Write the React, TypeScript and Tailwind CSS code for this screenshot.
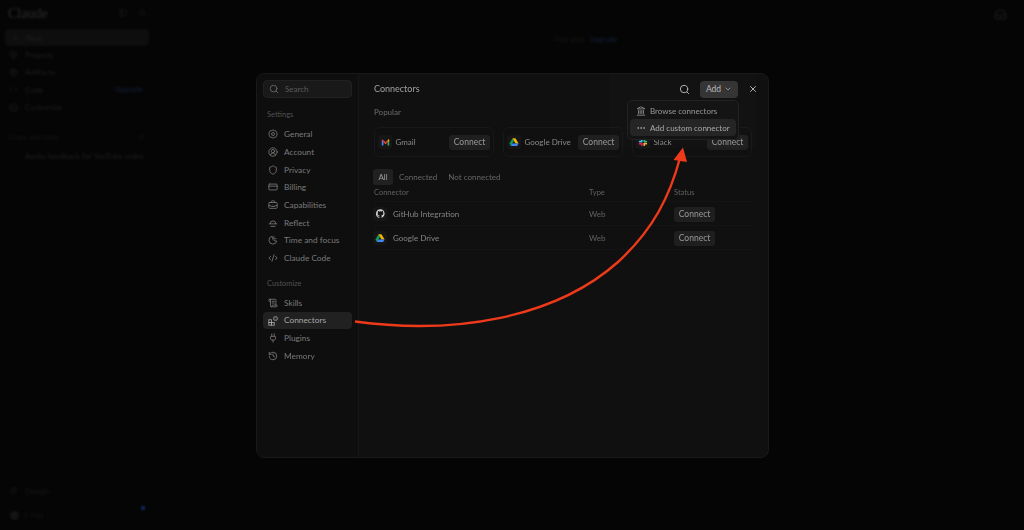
import { ChevronDown, Ellipsis, Search, X, Plus, Code, CodeXml, CreditCard, BriefcaseBusiness, CircleUserRound, ScrollText, History, Plug, Landmark, PanelLeft, Settings, Shield, Moon, Box, Package, Inbox, RefreshCw } from "lucide-react"
import type { ReactNode } from "react"

function GmailLogo() {
  return (
    <svg width="9" height="9" viewBox="0 0 24 24">
      <path d="M2 5v15h4.500V9z" fill="#4285f4" />
      <path d="M22 5v15h-4.500V9z" fill="#34a853" />
      <path d="M2 5l2-1 8 6.500L20 4l2 1v1l-10 8L2 6z" fill="#ea4335" />
      <path d="M6.500 9L12 13.500 17.500 9v3L12 16.500 6.500 12z" fill="#ea4335" />
      <path d="M19 3.500l3 1.500v2l-4.500 3.500z" fill="#fbbc04" />
    </svg>
  )
}

function DriveLogo({ size = 10 }: { size?: number }) {
  return (
    <svg width={size} height={size} viewBox="0 0 24 24">
      <path d="M8.500 3L1 15.500l3.500 6L12 9z" fill="#0f9d58" />
      <path d="M8.500 3h7L23 15.500h-7.500z" fill="#f4b400" />
      <path d="M8 15.500h15l-3.500 6h-15z" fill="#4285f4" />
    </svg>
  )
}

function SlackLogo() {
  return (
    <svg width="10" height="10" viewBox="0 0 24 24">
      <rect x="2" y="9" width="9" height="4" rx="2" fill="#36c5f0" />
      <rect x="7" y="2" width="4" height="9" rx="2" fill="#36c5f0" />
      <rect x="13" y="2" width="4" height="9" rx="2" fill="#2eb67d" />
      <rect x="13" y="9" width="9" height="4" rx="2" fill="#2eb67d" />
      <rect x="13" y="14" width="9" height="4" rx="2" fill="#ecb22e" />
      <rect x="13" y="15" width="4" height="7" rx="2" fill="#ecb22e" />
      <rect x="2" y="14" width="9" height="4" rx="2" fill="#e01e5a" />
      <rect x="7" y="15" width="4" height="7" rx="2" fill="#e01e5a" />
    </svg>
  )
}

function GithubLogo() {
  return (
    <svg width="9" height="9" viewBox="0 0 24 24" fill="#d0d0d0">
      <path d="M12 .5a12 12 0 0 0-3.800 23.400c.6.100.8-.3.800-.6v-2c-3.300.7-4-1.600-4-1.600-.5-1.400-1.300-1.800-1.300-1.800-1.100-.7.100-.7.100-.7 1.200.1 1.800 1.200 1.800 1.200 1.100 1.800 2.800 1.300 3.500 1 .1-.8.400-1.300.8-1.600-2.700-.3-5.500-1.300-5.500-5.900 0-1.300.5-2.400 1.200-3.200-.1-.3-.5-1.500.1-3.200 0 0 1-.3 3.300 1.200a11.500 11.500 0 0 1 6 0C17.300 4.700 18.300 5 18.300 5c.7 1.700.2 2.900.1 3.200.8.800 1.200 1.900 1.200 3.200 0 4.600-2.800 5.600-5.500 5.900.4.400.8 1.100.8 2.200v3.300c0 .3.200.7.800.6A12 12 0 0 0 12 .5z" />
    </svg>
  )
}

function ConnectBtn() {
  return (
    <span className="flex h-[15px] w-[41px] shrink-0 items-center justify-center rounded-[3px] bg-[#1f1f1f] text-[8.500px] text-[#989898]">
      Connect
    </span>
  )
}

function LogoBox({ children }: { children: ReactNode }) {
  return <span className="flex size-[14px] shrink-0 items-center justify-center rounded-[3px] bg-[#161616]">{children}</span>
}

function PopularCard({ name, logo }: { name: string; logo: ReactNode }) {
  return (
    <div className="flex h-[30px] w-[120px] items-center rounded-[6px] border border-[#181818] px-[3px]">
      <LogoBox>{logo}</LogoBox>
      <span className="ml-[3.500px] flex-1 whitespace-nowrap text-[8px] text-[#8a8a8a]">{name}</span>
      <ConnectBtn />
    </div>
  )
}

function ConnectorRow({ name, logo }: { name: string; logo: ReactNode }) {
  return (
    <div className="flex h-[24px] items-center border-b border-[#141414]">
      <span className="ml-[-1px] w-[20px]">
        <LogoBox>{logo}</LogoBox>
      </span>
      <span className="w-[196px] text-[8px] text-[#858585]">{name}</span>
      <span className="w-[85px] text-[8px] text-[#626262]">Web</span>
      <span className="mt-[1px]">
        <ConnectBtn />
      </span>
    </div>
  )
}

function GeneralIcon() {
  return (
    <svg width="10" height="10" viewBox="0 0 24 24" fill="none" stroke="currentColor" strokeWidth="2">
      <path d="M12 2l3 2 3.500 0 2 3.500 1.500 4.500-1.500 4.500-2 3.500H15l-3 2-3-2H5.500l-2-3.500L2 12l1.500-4.500 2-3.500H9z" />
      <circle cx="12" cy="12" r="3.500" />
    </svg>
  )
}

function ReflectIcon() {
  return (
    <svg width="10" height="10" viewBox="0 0 24 24" fill="none" stroke="currentColor" strokeWidth="2">
      <path d="M5 14a7 7 0 0 1 14 0" />
      <path d="M2 14h20" />
      <path d="M6 20h12" />
    </svg>
  )
}

function TimeIcon() {
  return (
    <svg width="10" height="10" viewBox="0 0 24 24" fill="none" stroke="currentColor" strokeWidth="2">
      <path d="M10 3a9.500 9.500 0 1 0 11 11.500A10 10 0 0 1 10 3z" />
      <path d="M14 3v6h6" />
    </svg>
  )
}

function ConnectorsIcon() {
  return (
    <svg width="10" height="10" viewBox="0 0 24 24" fill="none" stroke="currentColor" strokeWidth="2">
      <rect x="2" y="9" width="6.500" height="6.500" />
      <rect x="2" y="15.500" width="6.500" height="6.500" />
      <rect x="8.500" y="15.500" width="6.500" height="6.500" />
      <rect x="14" y="2" width="8" height="8" rx="1" />
    </svg>
  )
}

const settingsNav = [
  { label: "General", icon: <GeneralIcon /> },
  { label: "Account", icon: <CircleUserRound size={10} /> },
  { label: "Privacy", icon: <Shield size={10} /> },
  { label: "Billing", icon: <CreditCard size={10} /> },
  { label: "Capabilities", icon: <BriefcaseBusiness size={10} /> },
  { label: "Reflect", icon: <ReflectIcon /> },
  { label: "Time and focus", icon: <TimeIcon /> },
  { label: "Claude Code", icon: <CodeXml size={10} /> },
]

const customizeNav = [
  { label: "Skills", icon: <ScrollText size={10} /> },
  { label: "Connectors", icon: <ConnectorsIcon />, active: true },
  { label: "Plugins", icon: <Plug size={10} /> },
  { label: "Memory", icon: <History size={10} /> },
]

function ModalNavItem({ label, icon, active }: { label: string; icon: ReactNode; active?: boolean }) {
  return (
    <div className={`flex h-[17.700px] items-center gap-[6px] rounded-[4px] pl-[5px] text-[8.300px] ${active ? "bg-[#212121] text-[#a6a6a6]" : "text-[#7a7a7a]"}`}>
      <span className="flex w-[10px] justify-center">{icon}</span>
      <span>{label}</span>
    </div>
  )
}

const appNav = [
  { label: "Projects", icon: <Box size={9} /> },
  { label: "Artifacts", icon: <Package size={9} /> },
  { label: "Code", icon: <Code size={9} />, upgrade: true },
  { label: "Customize", icon: <Inbox size={9} /> },
]

function AppSidebar() {
  return (
    <aside className="flex h-full w-[150px] flex-col pl-[5px] pr-[1px] text-[#1f1f1f] blur-[0.9px]">
      <div className="flex h-[26px] items-center px-[3px]">
        <span className="flex-1 text-[14px] text-[#2c2c2c] [font-family:'Liberation_Serif',serif]">Claude</span>
        <PanelLeft size={8} className="mr-[11px]" />
        <Search size={8} />
      </div>
      <div className="mt-[3px] flex h-[17px] items-center gap-[7px] rounded-[4px] bg-[#0e0e0e] pl-[6px] text-[8px]">
        <Plus size={8} />
        <span>New</span>
      </div>
      {appNav.map((item) => (
        <div key={item.label} className="flex h-[17.500px] items-center gap-[7px] pl-[4px] text-[8px]">
          <span className="flex w-[9px] justify-center">{item.icon}</span>
          <span className="flex-1">{item.label}</span>
          {item.upgrade && <span className="pr-[6px] text-[7.500px] text-[#13203a]">Upgrade</span>}
        </div>
      ))}
      <div className="mt-[13px] flex h-[17px] items-center pl-[3px] pr-[4px] text-[7.500px] text-[#161616]">
        <span className="flex-1">Chats and tasks</span>
        <RefreshCw size={7} />
      </div>
      <div className="mt-[1px] flex h-[17px] items-center whitespace-nowrap pl-[20px] text-[8px]">
        <span>Audio feedback for YouTube video</span>
      </div>
      <div className="mt-auto flex h-[17px] items-center gap-[7px] pl-[4px] text-[8px] text-[#191919]">
        <Settings size={9} />
        <span>Design</span>
      </div>
      <div className="mb-[6px] mt-[8px] flex h-[17px] items-center gap-[5px] pl-[5px] pr-[4px] text-[7px] text-[#161616]">
        <span className="size-[9px] rounded-full bg-[#141414]" />
        <span className="flex-1">K Free</span>
        <span className="relative size-[6px]">
          <span className="absolute -top-[7px] left-[2px] size-[4px] rounded-full bg-[#12306f]" />
        </span>
      </div>
    </aside>
  )
}

export default function App() {
  return (
    <div className="relative flex h-[530px] w-[1024px] overflow-hidden bg-[#050505] [font-family:'Lato',sans-serif]">
      <AppSidebar />

      <main className="flex-1 blur-[0.9px]">
        <div className="ml-[404px] mt-[34px] flex gap-[5px] text-[7.500px]">
          <span className="text-[#191919]">Free plan</span>
          <span className="text-[#14213f]">Upgrade</span>
        </div>
      </main>

      <div className="absolute right-[17px] top-[8px] text-[#1c1c1c] blur-[0.9px]">
        <Inbox size={13} />
      </div>

      {/* settings dialog */}
      <div className="absolute left-[256px] top-[73px] flex h-[385px] w-[513px] overflow-hidden rounded-[8px] border border-[#191919] bg-[#101010] blur-[0.5px]">
        <nav className="w-[102px] shrink-0 border-r border-[#161616] bg-[#0e0e0e] px-[6px] pt-[6px]">
          <div className="flex h-[18px] items-center gap-[6px] rounded-[4px] border border-[#212121] bg-[#191919] pl-[5px] text-[8px] text-[#5a5a5a]">
            <Search size={10} className="text-[#6e6e6e]" />
            <span>Search</span>
          </div>
          <div className="mt-[10px] flex h-[14px] items-center pl-[4px] text-[7.500px] text-[#505050]">Settings</div>
          <div className="mt-[3.500px]">
            {settingsNav.map((item) => (
              <ModalNavItem key={item.label} {...item} />
            ))}
          </div>
          <div className="mt-[10px] flex h-[14px] items-center pl-[4px] text-[7.500px] text-[#505050]">Customize</div>
          <div className="mt-[3px]">
            {customizeNav.map((item) => (
              <ModalNavItem key={item.label} {...item} />
            ))}
          </div>
        </nav>

        <section className="flex-1 pl-[15px] pr-[16px]">
          <header className="flex h-[30px] items-center">
            <h1 className="flex-1 text-[9px] font-normal text-[#a0a0a0]">Connectors</h1>
            <Search size={11} className="mr-[10px] text-[#c0c0c0]" />
            <span className="flex h-[17px] w-[38px] items-center justify-center gap-[3px] rounded-[4px] bg-[#333333] text-[8.500px] text-[#b8b8b8]">
              Add
              <ChevronDown size={8} />
            </span>
            <X size={10} className="-mr-[6px] ml-[10px] text-[#d0d0d0]" />
          </header>

          <div className="mt-[2px] text-[8px] text-[#6e6e6e]">Popular</div>
          <div className="mt-[9px] flex gap-[9px]">
            <PopularCard name="Gmail" logo={<GmailLogo />} />
            <PopularCard name="Google Drive" logo={<DriveLogo />} />
            <PopularCard name="Slack" logo={<SlackLogo />} />
          </div>

          <div className="-ml-[1px] mt-[12px] flex items-center text-[8px] text-[#666666]">
            <span className="flex h-[16px] w-[20px] items-center justify-center rounded-[3px] bg-[#212121] text-[#a0a0a0]">All</span>
            <span className="ml-[6px]">Connected</span>
            <span className="ml-[11px]">Not connected</span>
          </div>

          <div className="flex h-[17px] items-center border-b border-[#141414] text-[7.500px] text-[#606060]">
            <span className="w-[215px]">Connector</span>
            <span className="w-[85px]">Type</span>
            <span>Status</span>
          </div>
          <ConnectorRow name="GitHub Integration" logo={<GithubLogo />} />
          <ConnectorRow name="Google Drive" logo={<DriveLogo />} />
        </section>
      </div>

      {/* faint lighter patch behind the add menu */}
      <div className="absolute left-[610px] top-[74px] h-[74px] w-[146px] bg-white/[0.012]" />

      {/* add menu */}
      <div className="absolute left-[627px] top-[100px] w-[112px] rounded-[5px] border border-[#222222] bg-[#141414] px-[2px] pb-[3px] pt-[1px] text-[8px] text-[#989898] blur-[0.5px]">
        <div className="flex h-[17px] items-center gap-[4px] whitespace-nowrap pl-[6px]">
          <Landmark size={10} />
          <span>Browse connectors</span>
        </div>
        <div className="flex h-[17px] items-center gap-[4px] whitespace-nowrap rounded-[4px] bg-[#252525] pl-[6px] text-[#aaaaaa]">
          <Ellipsis size={10} />
          <span>Add custom connector</span>
        </div>
      </div>

      {/* annotation arrow */}
      <svg className="absolute left-0 top-0" width="1024" height="530" viewBox="0 0 1024 530" fill="none">
        <path d="M355 321.500C455 335 555 318 618 262C654 229 670 195 680 158" stroke="#ee3a1a" strokeWidth="2.400" />
        <path d="M683 147.500L673.500 160L687 162Z" fill="#ee3a1a" />
      </svg>
    </div>
  )
}
